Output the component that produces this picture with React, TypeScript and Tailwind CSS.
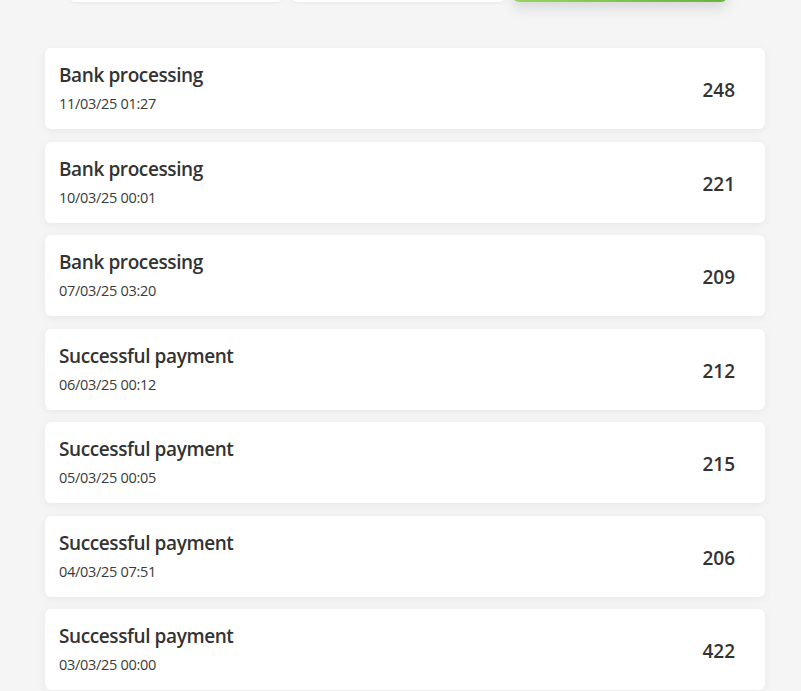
const transactions = [
  { title: 'Bank processing', date: '11/03/25 01:27', amount: 248 },
  { title: 'Bank processing', date: '10/03/25 00:01', amount: 221 },
  { title: 'Bank processing', date: '07/03/25 03:20', amount: 209 },
  { title: 'Successful payment', date: '06/03/25 00:12', amount: 212 },
  { title: 'Successful payment', date: '05/03/25 00:05', amount: 215 },
  { title: 'Successful payment', date: '04/03/25 07:51', amount: 206 },
  { title: 'Successful payment', date: '03/03/25 00:00', amount: 422 },
];

function TransactionCard({ title, date, amount }: { title: string; date: string; amount: number }) {
  return (
    <div className="h-[81px] bg-white rounded-md shadow-[0_2px_10px_rgba(0,0,0,0.06)] flex items-center justify-between pl-[14px] pr-[30px]">
      <div className="flex flex-col">
        <p className="text-[19px] leading-[24px] font-semibold text-[#333333] tracking-[-0.4px]">{title}</p>
        <p className="text-[14.5px] leading-[20px] mt-[7px] text-[#3a3a3a] tracking-[-0.3px]">{date}</p>
      </div>
      <p className="text-[19px] font-semibold text-[#333333] mt-[4px]">{amount}</p>
    </div>
  );
}

export default function App() {
  return (
    <div className="min-h-[691px] bg-[#f5f5f5] overflow-hidden font-['Open_Sans','Noto_Sans',sans-serif]">
      <div className="-mt-[38px] ml-[69px] grid grid-cols-[214px_214px_214px] gap-2 h-[40px]">
        <div className="bg-white rounded-md shadow-[0_1px_3px_rgba(0,0,0,0.06)]" />
        <div className="bg-white rounded-md shadow-[0_1px_3px_rgba(0,0,0,0.06)]" />
        <div className="rounded-md bg-gradient-to-r from-[#96d65e] to-[#68b23c] shadow-[0_6px_14px_rgba(0,0,0,0.12)]" />
      </div>

      <div className="ml-[45px] w-[720px] mt-[46px] flex flex-col gap-[12.5px] pb-4">
        {transactions.map((t, i) => (
          <TransactionCard key={i} {...t} />
        ))}
      </div>
    </div>
  );
}
